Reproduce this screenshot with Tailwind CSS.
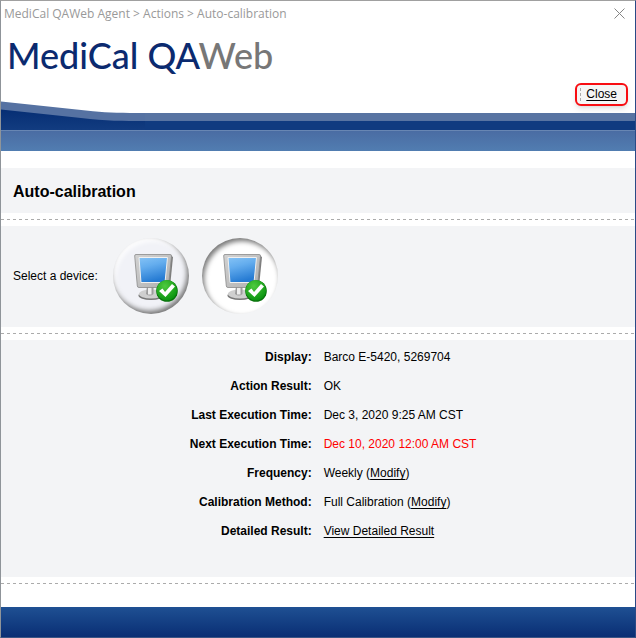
<!DOCTYPE html>
<html lang="en">
<head>
  <meta charset="UTF-8" />
  <meta name="viewport" content="width=device-width, initial-scale=1.0"/>
  <title>MediCal QAWeb Agent</title>
  <script src="https://cdn.jsdelivr.net/npm/@tailwindcss/browser@4"></script>
</head>
<body class="min-h-screen flex flex-col bg-white text-black text-[12px] leading-[15px] font-['Liberation_Sans',Arial,sans-serif] border-t border-x border-t-[#a0a0a0] border-l-[#8f9499] border-r-[#2a4a86] border-b border-b-[#3b5685]">

  <!-- Title bar -->
  <div class="flex items-center justify-between h-6 pl-[3px] pr-2">
    <nav class="font-['Open_Sans','Noto_Sans',sans-serif] text-[12px] text-[#999999]">MediCal QAWeb Agent &gt; Actions &gt; Auto-calibration</nav>
    <button type="button" aria-label="Close window" class="w-4 h-4 flex items-center justify-center">
      <svg class="w-[11px] h-[11px]" viewBox="0 0 11 11" stroke="#858585" stroke-width="1"><path d="M0.5 0.5L10.5 10.5M10.5 0.5L0.5 10.5"/></svg>
    </button>
  </div>

  <!-- Header -->
  <header>
    <div class="px-[6px] pt-1.5">
      <div class="font-[Lato,sans-serif] text-[36px] leading-[48px] font-medium text-[#0b2a6f]">MediCal QA<span class="text-[#777777]">Web</span></div>
    </div>
    <div class="flex justify-end pr-[7px] pt-1">
      <div class="rounded-md border-2 border-[#f80d12] p-[3px] shadow-md bg-[#f5f5f5] h-[23px]">
        <a href="#" class="block border-l border-dashed border-[#aaaaaa] pl-[5px] pr-[6px] leading-[13px] underline underline-offset-2">Close</a>
      </div>
    </div>
    <!-- Wave -->
    <div class="flex items-end -mt-[5px]">
      <svg class="w-36 h-[29px] shrink-0" viewBox="0 0 144 29">
        <defs>
          <linearGradient id="wave" x1="0" y1="0" x2="0" y2="1">
            <stop offset="0" stop-color="#062e74"/>
            <stop offset="1" stop-color="#123c80"/>
          </linearGradient>
        </defs>
        <path fill="#5672a2" d="M0 0.5L92 10.3C108 12 122 12 144 12V29H0Z"/>
        <path fill="url(#wave)" d="M0 8.5L80 17C105 20 122 20 144 20V29H0Z"/>
      </svg>
      <div class="flex-1 h-[17px] border-t-8 border-[#5874a2] bg-[#103b80]"></div>
    </div>
    <div class="h-[21px] border-t border-[#6886b3] bg-linear-to-b from-[#4a6ca3] to-[#517db1]"></div>
  </header>

  <main class="pt-[17px]">
    <section class="bg-[#f3f4f6] px-3 pt-[13px] pb-[11px]">
      <h1 class="text-[16px] leading-[21px] font-bold">Auto-calibration</h1>
    </section>
    <div class="h-px my-1.5 bg-[repeating-linear-gradient(90deg,#ababab_0_3px,transparent_3px_6px)]"></div>

    <!-- Devices -->
    <section class="flex items-center bg-[#f3f4f6] px-3 pt-3 pb-[13px]">
      <label for="device1">Select a device:</label>
      <div class="flex gap-[13px] ml-[15px]">
        <button type="button" id="device1" aria-label="Device 1" class="w-[76px] h-[76px] rounded-full bg-[#f1f2f7] shadow-[inset_-2px_-3px_5px_#777777,inset_2px_3px_5px_#ffffff]">
          <svg class="w-full h-full" viewBox="0 0 76 76">
            <defs>
              <linearGradient id="screen" x1="0" y1="0" x2="0.3" y2="1">
                <stop offset="0" stop-color="#85c3f6"/>
                <stop offset="0.4" stop-color="#64adee"/>
                <stop offset="1" stop-color="#267bd3"/>
              </linearGradient>
              <linearGradient id="metal" x1="0" y1="0" x2="1" y2="1">
                <stop offset="0" stop-color="#d2d2d2"/>
                <stop offset="1" stop-color="#b0b0b0"/>
              </linearGradient>
              <radialGradient id="green" cx="0.4" cy="0.3" r="0.7">
                <stop offset="0" stop-color="#4ecb3e"/>
                <stop offset="1" stop-color="#0b9410"/>
              </radialGradient>
              <g id="monitor">
                <ellipse cx="38" cy="57.5" rx="12.5" ry="4.5" fill="#777777"/>
                <ellipse cx="38" cy="56" rx="12" ry="4.5" fill="#cfcfcf"/>
                <path d="M34 48H40.500V56Q37 59 33 56Z" fill="#9d9d9d"/>
                <path d="M35 48H38.500V56.500H35Z" fill="#eeeeee"/>
                <path d="M57 17L60 19L57 49L53 49.500Z" fill="#7c7c7c"/>
                <path d="M23 16.500H57Q58.700 16.500 58.500 18L55.500 48Q55.300 49.500 54 49.500H26Q24.500 49.500 24.300 48L21.700 18Q21.500 16.500 23 16.500Z" fill="url(#metal)" stroke="#8a8a8a" stroke-width="0.800"/>
                <path d="M26 19.500H54.500L52 44.500H28Z" fill="url(#screen)" stroke="#f0f0f0" stroke-width="1"/>
                <circle cx="54" cy="53" r="10.800" fill="#08710b"/>
                <circle cx="53.800" cy="52.300" r="10.300" fill="url(#green)"/>
                <path d="M46 53L49.500 50.500L52 54L59 46L62 48.500L52.500 59Z" fill="#ffffff"/>
              </g>
            </defs>
            <use href="#monitor"/>
          </svg>
        </button>
        <button type="button" aria-label="Device 2" aria-pressed="true" class="w-[76px] h-[76px] rounded-full bg-white shadow-[inset_2px_3px_5px_#777777]">
          <svg class="w-full h-full" viewBox="0 0 76 76"><use href="#monitor"/></svg>
        </button>
      </div>
    </section>
    <div class="h-px my-1.5 bg-[repeating-linear-gradient(90deg,#ababab_0_3px,transparent_3px_6px)]"></div>

    <!-- Details -->
    <section class="bg-[#f3f4f6] pt-[3px] pb-[31px]">
      <table class="w-full">
        <tbody>
          <tr class="h-[29px]">
            <th class="w-[49%] text-right font-bold">Display:</th>
            <td class="pl-3">Barco E-5420, 5269704</td>
          </tr>
          <tr class="h-[29px]">
            <th class="text-right font-bold">Action Result:</th>
            <td class="pl-3">OK</td>
          </tr>
          <tr class="h-[29px]">
            <th class="text-right font-bold">Last Execution Time:</th>
            <td class="pl-3">Dec 3, 2020 9:25 AM CST</td>
          </tr>
          <tr class="h-[29px]">
            <th class="text-right font-bold">Next Execution Time:</th>
            <td class="pl-3 text-[#ff0000]">Dec 10, 2020 12:00 AM CST</td>
          </tr>
          <tr class="h-[29px]">
            <th class="text-right font-bold">Frequency:</th>
            <td class="pl-3">Weekly (<a href="#" class="underline underline-offset-2">Modify</a>)</td>
          </tr>
          <tr class="h-[29px]">
            <th class="text-right font-bold">Calibration Method:</th>
            <td class="pl-3">Full Calibration (<a href="#" class="underline underline-offset-2">Modify</a>)</td>
          </tr>
          <tr class="h-[29px]">
            <th class="text-right font-bold">Detailed Result:</th>
            <td class="pl-3"><a href="#" class="underline underline-offset-2">View Detailed Result</a></td>
          </tr>
        </tbody>
      </table>
    </section>
    <div class="h-px my-1.5 bg-[repeating-linear-gradient(90deg,#ababab_0_3px,transparent_3px_6px)]"></div>
  </main>

  <footer class="mt-auto h-[30px] bg-linear-to-b from-[#1f5093] to-[#0a2e74]"></footer>
</body>
</html>
